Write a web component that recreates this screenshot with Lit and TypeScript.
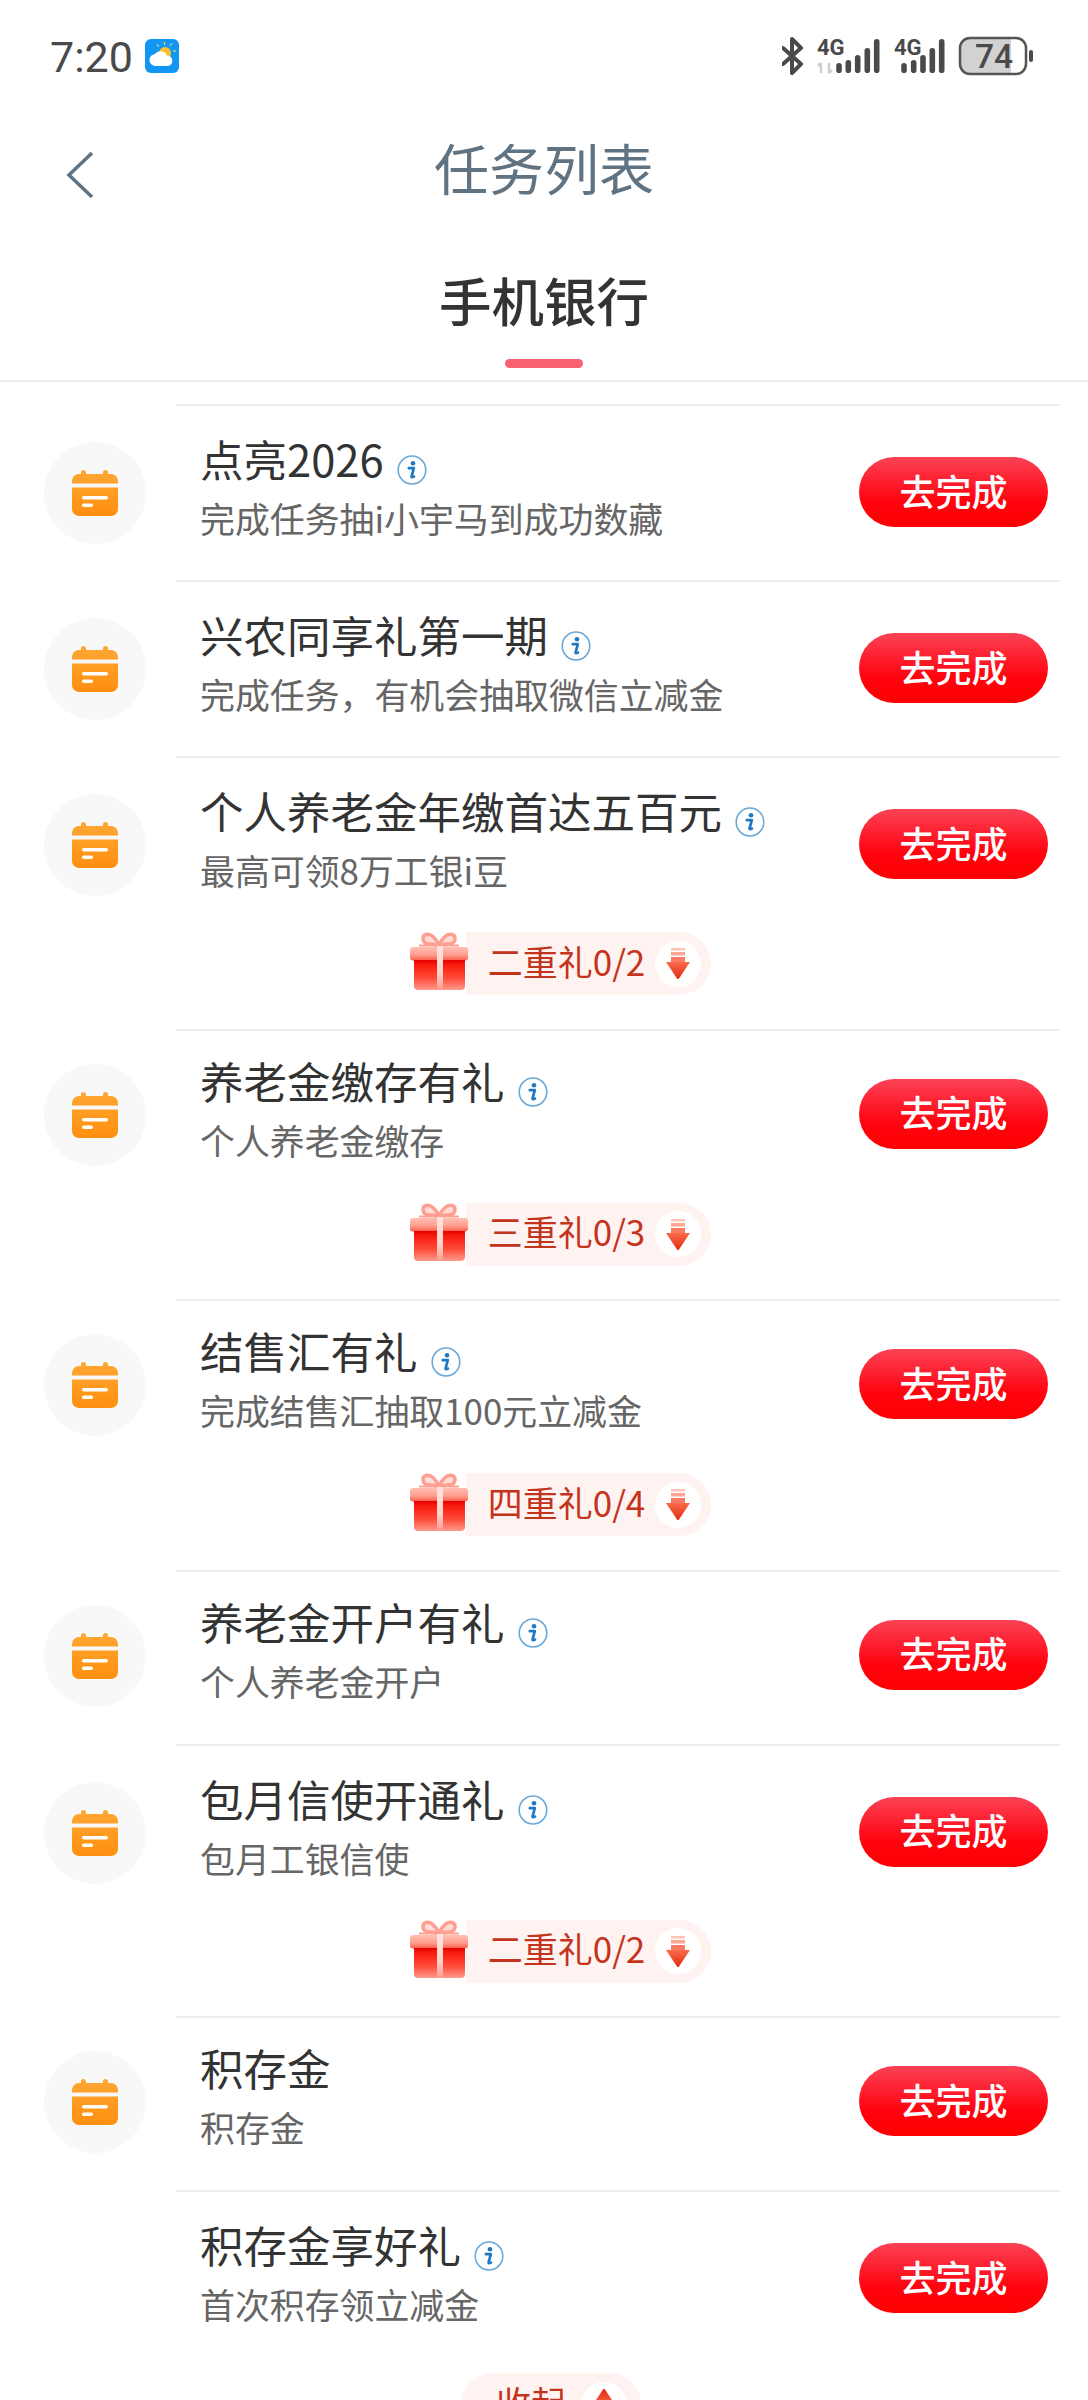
import { LitElement, html, css, svg } from 'lit';
import { customElement } from 'lit/decorators.js';
import { classMap } from 'lit/directives/class-map.js';

interface Task {
    title: string;
    sub: string;
    info?: boolean;
    icon?: boolean;
    compact?: boolean;
    reward?: string;
}

const TASKS: Task[] = [
    { title: '点亮2026', sub: '完成任务抽i小宇马到成功数藏', info: true, icon: true },
    { title: '兴农同享礼第一期', sub: '完成任务，有机会抽取微信立减金', info: true, icon: true },
    { title: '个人养老金年缴首达五百元', sub: '最高可领8万工银i豆', info: true, icon: true, reward: '二重礼0/2' },
    { title: '养老金缴存有礼', sub: '个人养老金缴存', info: true, icon: true, compact: true, reward: '三重礼0/3' },
    { title: '结售汇有礼', sub: '完成结售汇抽取100元立减金', info: true, icon: true, compact: true, reward: '四重礼0/4' },
    { title: '养老金开户有礼', sub: '个人养老金开户', info: true, icon: true, compact: true },
    { title: '包月信使开通礼', sub: '包月工银信使', info: true, icon: true, reward: '二重礼0/2' },
    { title: '积存金', sub: '积存金', icon: true, compact: true },
    { title: '积存金享好礼', sub: '首次积存领立减金', info: true },
];

const calendarIcon = html`<svg width="46" height="46" viewBox="0 0 46 46">
    <defs><linearGradient id="cal" x1="0" y1="0" x2="0" y2="1">
        <stop offset="0" stop-color="#ffa733"/><stop offset="1" stop-color="#ff8f0f"/>
    </linearGradient></defs>
    <path d="M9 2.500a2.500 2.500 0 0 1 5 0V4h17V2.500a2.500 2.500 0 0 1 5 0V4h3a7 7 0 0 1 7 7v2.500H0V11a7 7 0 0 1 7-7h2zM0 17.500h46V39a7 7 0 0 1-7 7H7a7 7 0 0 1-7-7z" fill="url(#cal)"/>
    <rect x="10" y="26" width="26" height="3.500" rx="1.750" fill="#fff"/>
    <rect x="10" y="33.500" width="11" height="3.500" rx="1.750" fill="#fff"/>
</svg>`;

const infoIcon = html`<svg width="30" height="30" viewBox="0 0 30 30">
    <ellipse cx="15" cy="15" rx="13.800" ry="14" fill="#fff" stroke="#6aa9d8" stroke-width="1.600"/>
    <circle cx="16" cy="8.200" r="2.300" fill="#1f78c4"/>
    <path d="M11.800 13.200h5l-2.200 8.200c-.2.900.5 1.200 2.400.2" fill="none" stroke="#1f78c4" stroke-width="2.700" stroke-linecap="round" stroke-linejoin="round"/>
</svg>`;

const giftIcon = html`<svg width="58" height="58" viewBox="0 0 58 58">
    <defs>
        <linearGradient id="lid" x1="0" y1="0" x2="0" y2="1"><stop offset="0" stop-color="#ffc0b4"/><stop offset=".6" stop-color="#ff9c8c"/><stop offset="1" stop-color="#fb5a48"/></linearGradient>
        <linearGradient id="box" x1="0" y1="0" x2="0" y2="1"><stop offset="0" stop-color="#e40000"/><stop offset=".15" stop-color="#f81a0c"/><stop offset=".6" stop-color="#ff4a38"/><stop offset="1" stop-color="#ff9a8c"/></linearGradient>
        <linearGradient id="rib" x1="0" y1="0" x2="0" y2="1"><stop offset="0" stop-color="#ffe2dc"/><stop offset=".6" stop-color="#ffd5cd"/><stop offset="1" stop-color="#ff9a8c"/></linearGradient>
        <linearGradient id="tip" x1="0" y1="0" x2="0" y2="1"><stop offset="0" stop-color="#fb6a4c"/><stop offset="1" stop-color="#e22c10"/></linearGradient>
    </defs>
    <path d="M29 13C25 5 20 1.500 16 2.500c-4 1-4 6.500 0 9zM29 13C33 5 38 1.500 42 2.500c4 1 4 6.500 0 9z" fill="#ffdcd5" stroke="#ff9f92" stroke-width="3.500"/>
    <path d="M9 13.500h40" stroke="#ff9f92" stroke-width="2"/>
    <rect x="0" y="15" width="58" height="13.500" rx="3" fill="url(#lid)"/>
    <path d="M4 28h51v26a4 4 0 0 1-4 4H8a4 4 0 0 1-4-4z" fill="url(#box)"/>
    <rect x="27" y="14" width="6" height="44" fill="url(#rib)"/>
</svg>`;

const arrow = (up: boolean) => svg`<svg width="24" height="31" viewBox="0 0 24 31" class=${up ? 'flip' : ''}>
    <rect x="5" y="0" width="14" height="2.500" fill="#ffc4b8"/>
    <rect x="5" y="4" width="14" height="3.500" fill="#ffa594"/>
    <rect x="5" y="9" width="14" height="5" fill="#fb7a62"/>
    <path d="M0 14h24L13 30.500a1.200 1.200 0 0 1-2 0z" fill="url(#tip)"/>
</svg>`;

@customElement('app-root')
export class AppRoot extends LitElement {
    static styles = css`
        :host {
            display: block;
            width: 1088px;
            height: 2400px;
            overflow: hidden;
            background: #fff;
            font-family: "Noto Sans CJK SC", "Liberation Sans", sans-serif;
            color: #333;
        }

        .status {
            display: flex;
            justify-content: space-between;
            align-items: center;
            height: 112px;
            padding: 0 54px 0 50px;
            box-sizing: border-box;
        }
        .status-left { display: flex; align-items: center; gap: 12px; }
        .time {
            font-family: Roboto, sans-serif;
            font-size: 43px;
            line-height: 50px;
            margin-top: 1px;
            color: #4a4a4a;
        }
        .status svg { display: block; }

        .nav {
            position: relative;
            display: flex;
            align-items: center;
            justify-content: center;
            height: 116px;
            padding-bottom: 9px;
            box-sizing: border-box;
        }
        .back { position: absolute; left: 66px; top: 39px; }
        .nav-title {
            font-size: 55px;
            line-height: 70px;
            color: #5f7382;
        }

        .tabs {
            display: flex;
            flex-direction: column;
            align-items: center;
            height: 154px;
            box-sizing: border-box;
            border-bottom: 2px solid #ececec;
        }
        .tab-label {
            font-size: 52.500px;
            line-height: 68px;
            font-weight: 500;
            color: #333;
            margin-top: 37px;
        }
        .tab-bar {
            width: 78px;
            height: 9px;
            margin-top: 26px;
            background: #f7626f;
            border-radius: 5px;
        }

        .list { padding-top: 22px; }
        .main { display: flex; padding-left: 44px; }
        .icon-cell { width: 132px; flex: none; padding-top: 38px; box-sizing: border-box; }
        .compact .icon-cell { padding-top: 35px; }
        .circle {
            display: flex;
            align-items: center;
            justify-content: center;
            width: 102px;
            height: 102px;
            border-radius: 50%;
            background: #f8f8f8;
        }
        .body {
            flex: 1;
            display: flex;
            align-items: flex-start;
            justify-content: space-between;
            height: 176px;
            box-sizing: border-box;
            margin-right: 28px;
            padding: 23px 12px 0 24px;
            border-top: 2px solid #ececec;
        }
        .compact .body { height: 174px; padding-top: 20px; }
        .text { display: flex; flex-direction: column; }
        .title-line { display: flex; align-items: center; gap: 13px; }
        .title-line svg { margin-top: 22px; flex: none; }
        .title { font-size: 43.500px; line-height: 60px; color: #333; }
        .sub { font-size: 34.900px; line-height: 46px; margin-top: 6px; color: #666; }
        .btn {
            display: flex;
            align-items: center;
            justify-content: center;
            width: 189px;
            height: 70px;
            margin-top: 28px;
            padding-bottom: 5px;
            box-sizing: border-box;
            border-radius: 35px;
            background: linear-gradient(#fb4256, #ff0410 62%, #fe0000);
            color: #fff;
            font-size: 36px;
            font-weight: 500;
            line-height: 44px;
        }

        .reward {
            display: flex;
            justify-content: center;
            align-items: flex-start;
            padding: 0 0 33.500px 33px;
        }
        .reward-icon { flex: none; position: relative; z-index: 1; display: block; height: 58px; }
        .pill {
            display: flex;
            align-items: center;
            height: 63px;
            box-sizing: border-box;
            padding: 0 10px 0 22px;
            margin-left: -2px;
            gap: 10px;
            background: #fff3f1;
            border-radius: 0 32px 32px 0;
            color: #c4331c;
            font-size: 35px;
            line-height: 48px;
            white-space: nowrap;
        }
        .pill-text { margin-bottom: 6px; }
        .pill-arrow {
            display: flex;
            align-items: center;
            justify-content: center;
            flex: none;
            width: 46px;
            height: 46px;
            border-radius: 50%;
            background: #fff;
        }
        .flip { transform: rotate(180deg); }

        .collapse {
            display: flex;
            justify-content: center;
            padding: 7px 0 0 14px;
        }
        .collapse .pill {
            width: 180px;
            margin: 0;
            padding: 0 14px 0 35px;
            gap: 15px;
            border-radius: 32px;
        }
    `;

    private renderStatus() {
        return html`
            <div class="status">
                <div class="status-left">
                    <span class="time">7:20</span>
                    <svg width="34" height="34" viewBox="0 0 34 34">
                        <rect width="34" height="34" rx="6" fill="#1296f3"/>
                        <path d="M19 3l1 3M27 4l-2 3M31 12h-3M12 5l2 3" stroke="#f5e08a" stroke-width="1"/>
                        <circle cx="20" cy="14" r="6" fill="#fbc02d"/>
                        <path d="M11 27a6 6 0 0 1-1-12 7 7 0 0 1 12 1.500a5.300 5.300 0 0 1 1 10.500z" fill="#fff"/>
                    </svg>
                </div>
                <svg width="252" height="40" viewBox="0 0 252 40">
                    <path d="M1 12l18 16-9 9V3l9 9L1 28" fill="none" stroke="#4a4a4a" stroke-width="4" stroke-linecap="round" stroke-linejoin="round"/>
                    <text x="35" y="19" font-family="Roboto, sans-serif" font-weight="700" font-size="22" fill="#4a4a4a">4G</text>
                    <path d="M39 27v10M36 30l3-3M47 27v10M50 34l-3 3" stroke="#cfcfcf" stroke-width="2.500" fill="none"/>
                    <g fill="#4a4a4a">
                        <rect x="54.200" y="27" width="5.600" height="10" rx="2.800"/>
                        <rect x="63.500" y="24" width="5.600" height="13" rx="2.800"/>
                        <rect x="72.900" y="19" width="5.600" height="18" rx="2.800"/>
                        <rect x="82.500" y="12" width="5.600" height="25" rx="2.800"/>
                        <rect x="91.900" y="3" width="5.600" height="34" rx="2.800"/>
                    </g>
                    <text x="112" y="19" font-family="Roboto, sans-serif" font-weight="700" font-size="22" fill="#4a4a4a">4G</text>
                    <g fill="#4a4a4a">
                        <rect x="119.200" y="27" width="5.600" height="10" rx="2.800"/>
                        <rect x="128.900" y="24" width="5.600" height="13" rx="2.800"/>
                        <rect x="138.200" y="19" width="5.600" height="18" rx="2.800"/>
                        <rect x="147.500" y="12" width="5.600" height="25" rx="2.800"/>
                        <rect x="156.900" y="3" width="5.600" height="34" rx="2.800"/>
                    </g>
                    <path d="M187 2h42v36h-42a9 9 0 0 1-9-9V11a9 9 0 0 1 9-9z" fill="#d2d2d2"/>
                    <rect x="178" y="2" width="66" height="36" rx="10" fill="none" stroke="#555" stroke-width="2.500"/>
                    <text x="193" y="32" font-family="Roboto, sans-serif" font-weight="500" font-size="33.500" fill="#4a4a4a">74</text>
                    <rect x="247" y="14" width="4" height="12" rx="2" fill="#4a4a4a"/>
                </svg>
            </div>
        `;
    }

    private renderTask(t: Task) {
        return html`
            <div class=${classMap({ task: true, compact: !!t.compact })}>
                <div class="main">
                    <div class="icon-cell">
                        ${t.icon ? html`<div class="circle">${calendarIcon}</div>` : ''}
                    </div>
                    <div class="body">
                        <div class="text">
                            <div class="title-line">
                                <span class="title">${t.title}</span>
                                ${t.info ? infoIcon : ''}
                            </div>
                            <span class="sub">${t.sub}</span>
                        </div>
                        <div class="btn">去完成</div>
                    </div>
                </div>
                ${t.reward ? html`
                    <div class="reward">
                        <span class="reward-icon">${giftIcon}</span>
                        <div class="pill">
                            <span class="pill-text">${t.reward}</span>
                            <span class="pill-arrow">${arrow(false)}</span>
                        </div>
                    </div>
                ` : ''}
            </div>
        `;
    }

    render() {
        return html`
            ${this.renderStatus()}
            <div class="nav">
                <svg class="back" width="28" height="48" viewBox="0 0 28 48">
                    <path d="M26 2L3 24l23 22" fill="none" stroke="#5f7382" stroke-width="3.500"/>
                </svg>
                <span class="nav-title">任务列表</span>
            </div>
            <div class="tabs">
                <span class="tab-label">手机银行</span>
                <span class="tab-bar"></span>
            </div>
            <div class="list">
                ${TASKS.map((t) => this.renderTask(t))}
                <div class="collapse">
                    <div class="pill">
                        <span class="pill-text">收起</span>
                        <span class="pill-arrow">${arrow(true)}</span>
                    </div>
                </div>
            </div>
        `;
    }
}
